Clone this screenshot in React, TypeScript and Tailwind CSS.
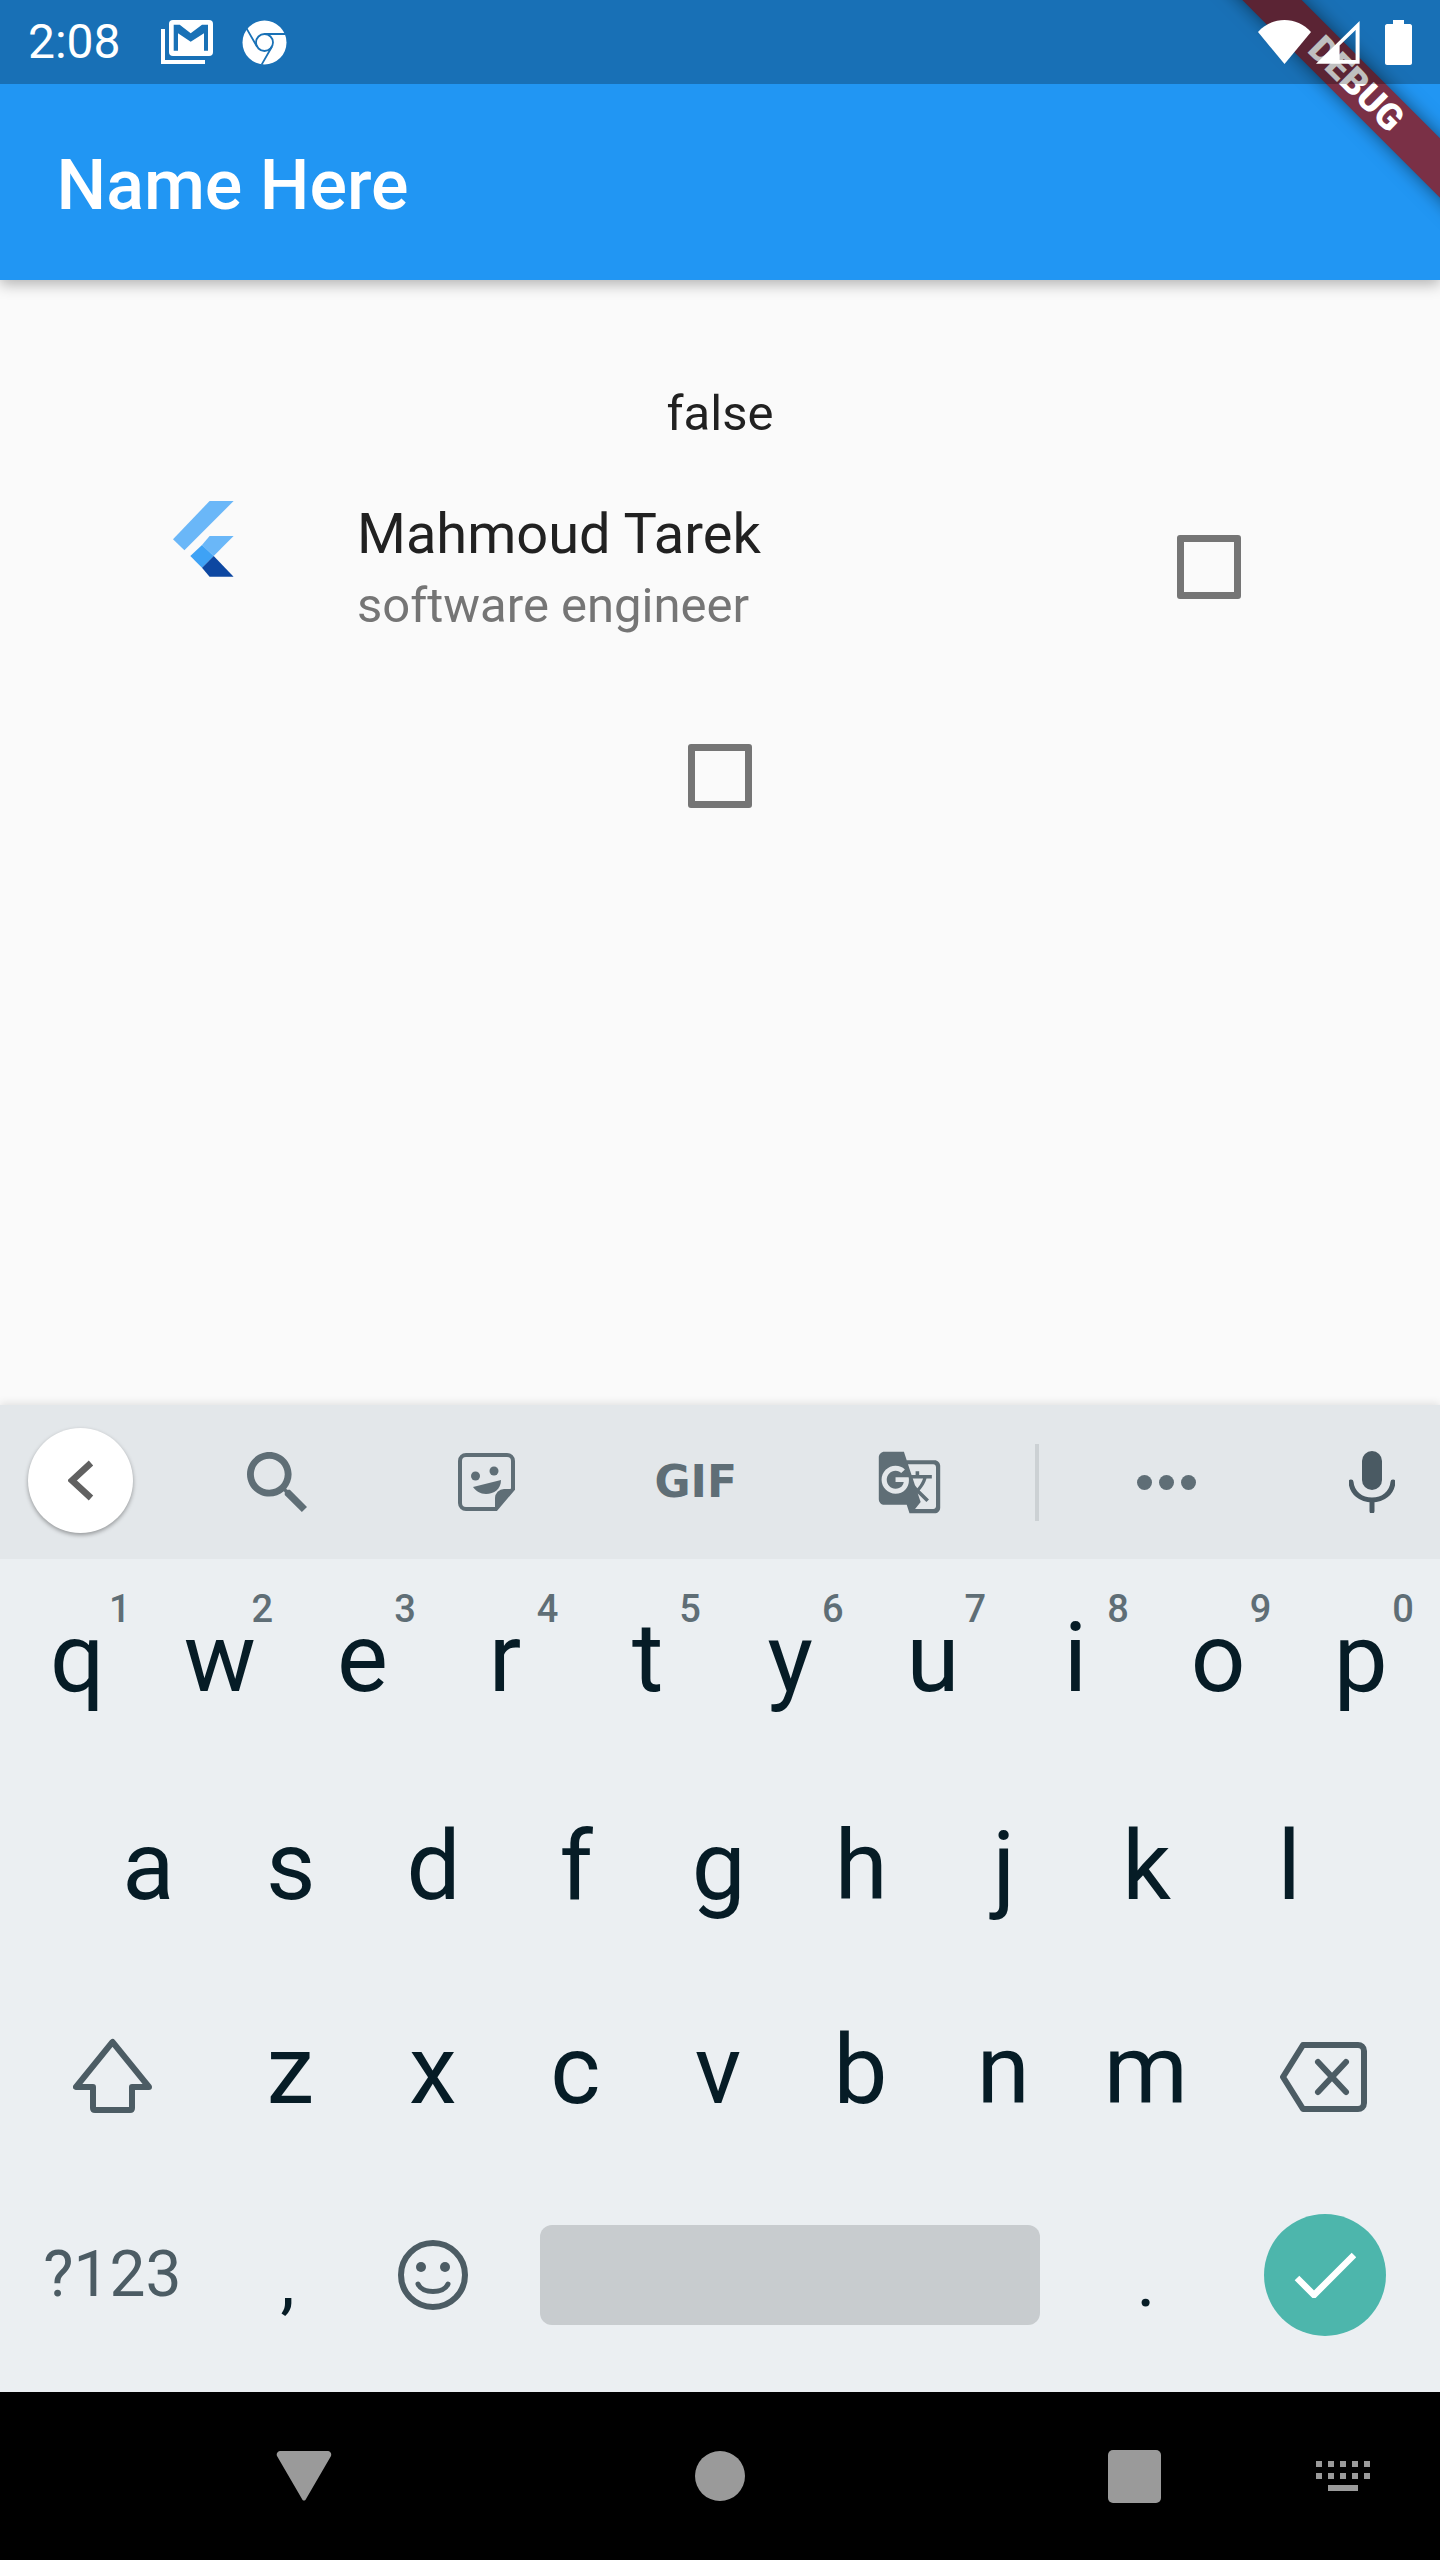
import { MdGTranslate } from "react-icons/md";

const roboto = "font-['Roboto',sans-serif]";

// number hints sit over the top row keys
const topRow = [
  ["q", "1"],
  ["w", "2"],
  ["e", "3"],
  ["r", "4"],
  ["t", "5"],
  ["y", "6"],
  ["u", "7"],
  ["i", "8"],
  ["o", "9"],
  ["p", "0"],
];

const Key = ({ label, hint, low }: { label: string; hint?: string; low?: boolean }) => (
  <div className="relative flex h-full w-[142.6px] items-center justify-center">
    <span className={`${low ? "pb-[19px]" : "pb-[11px]"} text-[96px] leading-none text-[#061c26]`}>{label}</span>
    {hint && (
      <span className="absolute right-[18px] top-[31px] text-[38px] font-medium leading-none text-[#5f6e76]">
        {hint}
      </span>
    )}
  </div>
);

const GmailIcon = () => (
  <svg width="53" height="44" viewBox="0 0 53 44" fill="none">
    <path d="M2 9V42H44" stroke="white" strokeWidth="4" />
    <rect x="8" y="0" width="44" height="36" rx="4" fill="white" />
    <path d="M12.7 4.700H18.700L29.700 13.300L41 4.700H47V30.700H43V13.300L29.700 21.700L17 13.300V30.700H12.700Z" fill="#1971b6" />
  </svg>
);

const ChromeIcon = () => (
  <svg width="45" height="45" viewBox="0 0 45 45" className="ml-[28px]" fill="none">
    <circle cx="22.5" cy="22.5" r="22" fill="white" />
    <circle cx="22.5" cy="22.5" r="8.500" stroke="#1971b6" strokeWidth="1.800" />
    <path d="M22.500 14H43M29.900 26.750L19.600 44.600M15.100 26.750L4.500 8.400" stroke="#1971b6" strokeWidth="1.800" />
  </svg>
);

const FlutterLogo = () => (
  <svg width="61" height="76" viewBox="0 0 61 76" className="shrink-0">
    <path d="M36.6 0H60.6L11.4 49.3L0 38.3Z" fill="#6ab7f8" />
    <path d="M36.6 35H60.6L40.7 55L29 44Z" fill="#6ab7f8" />
    <path d="M29 44L40.7 55L29 66.7L17.3 55Z" fill="#3ea2f5" />
    <path d="M40.7 55L60.6 75.7H36.6L29 66.7Z" fill="#0d47a1" />
  </svg>
);

const Checkbox = () => (
  <div className="h-[64px] w-[64px] rounded-[3px] border-[7px] border-[#757575]" />
);

const DebugBanner = () => (
  <div className="absolute right-0 top-0 h-[280px] w-[300px] overflow-hidden">
    <div className="absolute left-[-34px] top-[63px] flex h-[42px] w-[500px] rotate-45 items-center justify-center bg-[#7a3046] shadow-[0_0_18px_rgba(0,0,0,0.5)]">
      <span className="text-[36.5px] font-black leading-none text-white">DEBUG</span>
    </div>
  </div>
);

const StatusBar = () => (
  <div className="absolute inset-x-0 top-0 flex h-[84px] items-center bg-black/25 pl-[28px] pr-[28px] text-white">
    <span className="w-[133px] text-[48px] leading-none">2:08</span>
    <GmailIcon />
    <ChromeIcon />
    <div className="ml-auto flex items-center">
      <svg width="53" height="44" viewBox="0 0 53 44">
        <path d="M0 12C14 -4 39 -4 53 12L26.5 44Z" fill="white" />
      </svg>
      <svg width="44" height="43" viewBox="0 0 44 43" className="ml-[5px]">
        <path fillRule="evenodd" d="M0 42.700L43.600 0V42.700ZM23.600 24.500V39H39.600V9Z" fill="white" />
      </svg>
      <svg width="27" height="45" viewBox="0 0 27 45" className="ml-[25px]">
        <path d="M8 0H19V4H25C26 4 27 5 27 6V43C27 44 26 45 25 45H2C1 45 0 44 0 43V6C0 5 1 4 2 4H8Z" fill="white" />
      </svg>
    </div>
  </div>
);

const Toolbar = () => (
  <div className="flex h-[154px] items-center bg-[#e3e7ea] pl-[28px] text-[#5f6e76]">
    <div className="mb-[3px] flex h-[105px] w-[105px] items-center justify-center rounded-full bg-white shadow-[0_2px_4px_rgba(0,0,0,0.35)]">
      <svg width="26" height="41" viewBox="0 0 26 41" fill="none">
        <path d="M23 3L4 20.500L23 38" stroke="#616161" strokeWidth="6.500" />
      </svg>
    </div>
    <svg width="60" height="60" viewBox="3 3 17.49 17.49" className="ml-[113.5px]" fill="currentColor">
      <path d="M15.5 14h-.79l-.28-.27C15.41 12.59 16 11.11 16 9.5 16 5.91 13.09 3 9.5 3S3 5.91 3 9.5 5.91 16 9.5 16c1.61 0 3.09-.59 4.23-1.57l.27.28v.79l5 4.99L20.49 19l-4.99-5zm-6 0C7.01 14 5 11.99 5 9.5S7.01 5 9.5 5 14 7.01 14 9.5 11.99 14 9.5 14z" />
    </svg>
    <svg width="57" height="58" viewBox="0 0 57 58" className="ml-[151px]" fill="currentColor">
      <path d="M8 2H49A6 6 0 0 1 55 8V36L38 56H8A6 6 0 0 1 2 50V8A6 6 0 0 1 8 2Z" fill="none" stroke="currentColor" strokeWidth="4" />
      <path d="M55 36H46A9 9 0 0 0 37 45V56Z" />
      <ellipse cx="17.5" cy="23" rx="4.5" ry="4.5" />
      <ellipse cx="36" cy="18" rx="4.5" ry="4.5" />
      <path d="M15 34L43 27C43 36 36 41 28 41C22 41 18 38 15 34Z" />
    </svg>
    <span className="ml-[140px] w-[81px] text-center font-['DejaVu_Sans',sans-serif] text-[44px] font-bold leading-none">
      GIF
    </span>
    <MdGTranslate className="ml-[140px] h-[67px] w-[67px]" />
    <div className="ml-[92px] h-[77px] w-[4px] bg-[#ccd1d4]" />
    <div className="ml-[98px] flex gap-[7px]">
      <div className="h-[15px] w-[15px] rounded-full bg-current" />
      <div className="h-[15px] w-[15px] rounded-full bg-current" />
      <div className="h-[15px] w-[15px] rounded-full bg-current" />
    </div>
    <svg width="46" height="62" viewBox="0 0 46 62" className="ml-[153px] text-[#4a5a63]" fill="none">
      <rect x="13" y="0" width="20" height="39" rx="10" fill="currentColor" />
      <path d="M2 31C3 42 12 49 23 49C34 49 43 42 44 31M23 49V60" stroke="currentColor" strokeWidth="5" strokeLinecap="round" />
    </svg>
  </div>
);

const NavBar = () => (
  <div className="flex h-[168px] items-center bg-black text-[#9a9a9a]">
    <svg width="56" height="50" viewBox="0 0 56 50" className="ml-[276px]">
      <path d="M5 0H51C54 0 56 2 55 5L30 48C29 50 27 50 26 48L1 5C0 2 2 0 5 0Z" fill="currentColor" />
    </svg>
    <div className="ml-[363px] h-[50px] w-[50px] rounded-full bg-current" />
    <div className="ml-[363px] h-[53px] w-[53px] rounded-[5px] bg-current" />
    <svg width="54" height="30" viewBox="0 0 54 30" className="ml-[155px]" fill="currentColor">
      <path d="M0 0h6v6H0zM12 0h6v6h-6zM24 0h6v6h-6zM36 0h6v6h-6zM48 0h6v6h-6zM0 12h6v6H0zM12 12h6v6h-6zM24 12h6v6h-6zM36 12h6v6h-6zM48 12h6v6h-6zM12 24h30v6H12z" />
    </svg>
  </div>
);

export default function App() {
  return (
    <div className={`relative flex h-[2560px] w-[1440px] flex-col overflow-hidden bg-[#fafafa] ${roboto}`}>
      <header className="relative z-10 flex h-[280px] items-center bg-[#2196f3] pl-[56.5px] pt-[90px] shadow-[0_4px_14px_rgba(0,0,0,0.3)]">
        <h1 className="text-[70px] font-medium leading-none text-white">Name Here</h1>
        <DebugBanner />
        <StatusBar />
      </header>

      <main className="flex flex-1 flex-col items-center pt-[105px] text-[#212121]">
        <p className="text-[49px] leading-[57px]">false</p>
        <div className="mt-[59px] flex w-full items-center pl-[173px] pr-[199px]">
          <div className="mb-[58px] w-[184px] shrink-0">
            <FlutterLogo />
          </div>
          <div className="flex-1">
            <div className="text-[56px] leading-[66px]">Mahmoud Tarek</div>
            <div className="mt-[10px] text-[49px] leading-[58px] text-[#757575]">software engineer</div>
          </div>
          <div className="mb-[2px]">
            <Checkbox />
          </div>
        </div>
        <div className="mt-[109px]">
          <Checkbox />
        </div>
      </main>

      <div className="shadow-[0_-2px_8px_rgba(0,0,0,0.1)]">
        <Toolbar />
        <div className="bg-[#ebeff2]">
          <div className="flex h-[208px] px-[6px]">
            {topRow.map(([label, hint]) => (
              <Key key={label} label={label} hint={hint} />
            ))}
          </div>
          <div className="flex h-[208px] px-[77px]">
            {"asdfghjkl".split("").map((l) => (
              <Key key={l} label={l} />
            ))}
          </div>
          <div className="flex h-[208px] px-[5px]">
            <div className="flex w-[213.9px] items-center justify-center pb-[8px] pl-[2px]">
              <svg width="79" height="75" viewBox="0 0 79 75" fill="none">
                <path d="M39.5 4L3 49H20V70C20 71.500 21 72 22 72H57C58 72 59 71.500 59 70V49H76Z" stroke="#4c5c64" strokeWidth="6" strokeLinejoin="round" />
              </svg>
            </div>
            {"zxcvbnm".split("").map((l) => (
              <Key key={l} label={l} low />
            ))}
            <div className="flex w-[213.9px] items-center justify-center pb-[4px]">
              <svg width="87" height="70" viewBox="0 0 87 70" fill="none">
                <path d="M23 3H78C81 3 84 5 84 9V61C84 65 81 67 78 67H23L3 35Z" stroke="#4c5c64" strokeWidth="6" strokeLinejoin="round" />
                <path d="M38 20L66 50M66 20L38 50" stroke="#4c5c64" strokeWidth="6" strokeLinecap="round" />
              </svg>
            </div>
          </div>
          <div className="flex h-[209px] items-center pb-[26px] pl-[5.5px]">
            <div className="w-[213.9px] text-center text-[64px] leading-none text-[#4c5c64]">?123</div>
            <div className="mt-[14px] w-[142.6px] pr-[6px] text-center text-[72px] leading-none text-[#061c26]">,</div>
            <div className="flex w-[142.6px] justify-center">
              <svg width="70" height="70" viewBox="0 0 70 70" fill="none">
                <circle cx="35" cy="35" r="32" stroke="#4c5c64" strokeWidth="6" />
                <circle cx="23" cy="27" r="5" fill="#4c5c64" />
                <circle cx="47" cy="27" r="5" fill="#4c5c64" />
                <path d="M20 44C24 54 46 54 50 44" stroke="#4c5c64" strokeWidth="5" strokeLinecap="round" />
              </svg>
            </div>
            <div className="flex w-[570px] justify-center">
              <div className="h-[100px] w-[500px] rounded-[12px] bg-[#c8cccf]" />
            </div>
            <div className="mt-[14px] w-[142.6px] text-center text-[72px] leading-none text-[#061c26]">.</div>
            <div className="flex w-[216px] justify-center">
              <div className="flex h-[122px] w-[122px] items-center justify-center rounded-full bg-[#4db6ac]">
                <svg width="62" height="46" viewBox="0 0 62 46" fill="none">
                  <path d="M3 26L20 43L60 3" stroke="white" strokeWidth="6.500" />
                </svg>
              </div>
            </div>
          </div>
        </div>
      </div>
      <NavBar />
    </div>
  );
}
